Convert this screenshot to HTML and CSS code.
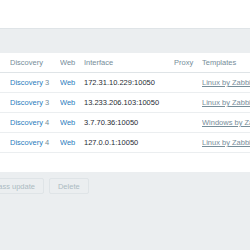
FILE: index.html
```html
<!DOCTYPE html>
<html lang="en">
<head>
  <meta charset="UTF-8">
  <meta name="viewport" content="width=device-width, initial-scale=1.0">
  <link rel="stylesheet" href="styles.css">
</head>
<body>
  <div class="top"></div>
  <div class="filter-bar"></div>

  <!-- hosts list -->
  <div class="list">
    <div class="row head">
      <div>Discovery</div>
      <div>Web</div>
      <div>Interface</div>
      <div>Proxy</div>
      <div>Templates</div>
    </div>
    <div class="row">
      <div><a class="link">Discovery</a> <span class="count">3</span></div>
      <div><a class="link">Web</a></div>
      <div>172.31.10.229:10050</div>
      <div></div>
      <div><a class="tpl">Linux by Zabbix agent</a></div>
    </div>
    <div class="row">
      <div><a class="link">Discovery</a> <span class="count">3</span></div>
      <div><a class="link">Web</a></div>
      <div>13.233.206.103:10050</div>
      <div></div>
      <div><a class="tpl">Linux by Zabbix agent</a></div>
    </div>
    <div class="row">
      <div><a class="link">Discovery</a> <span class="count">4</span></div>
      <div><a class="link">Web</a></div>
      <div>3.7.70.36:10050</div>
      <div></div>
      <div><a class="tpl">Windows by Zabbix agent</a></div>
    </div>
    <div class="row">
      <div><a class="link">Discovery</a> <span class="count">4</span></div>
      <div><a class="link">Web</a></div>
      <div>127.0.0.1:10050</div>
      <div></div>
      <div><a class="tpl">Linux by Zabbix server</a></div>
    </div>
    <div class="list-foot"></div>
  </div>

  <div class="actions">
    <button class="btn first" disabled>Mass update</button>
    <button class="btn" disabled>Delete</button>
  </div>
</body>
</html>
```

FILE: styles.css
```css
html, body {
  margin: 0;
  padding: 0;
  height: 100%;
}

body {
  background-color: #ebeef0;
  font-family: "Liberation Sans", Arial, sans-serif;
  font-size: 7.5px;
  color: #1f2c33;
  overflow: hidden;
}

.top {
  height: 28px;
  background-color: #fff;
  border-bottom: 1px solid #dfe4e7;
}

.filter-bar {
  height: 24px;
  background-color: #ebeef0;
}

.list {
  background-color: #fff;
}

.row {
  display: grid;
  grid-template-columns: 50px 24px 90px 28px 1fr;
  padding-left: 10px;
  height: 19px;
  align-items: center;
  border-bottom: 1px solid #ebeef0;
  white-space: nowrap;
  overflow: hidden;
}

.row > div {
  overflow: hidden;
}

.row.head {
  color: #768d99;
  border-bottom: 1px solid #dfe4e7;
}

.link {
  color: #2a7dbd;
}

.count {
  color: #768d99;
}

.tpl {
  color: #768d99;
  text-decoration: underline;
}

.list-foot {
  height: 19px;
}

.actions {
  display: flex;
  gap: 5px;
  padding-top: 6px;
}

.btn {
  font-family: inherit;
  font-size: 7.5px;
  height: 16px;
  padding: 0 8px;
  background-color: #ebeef0;
  border: 1px solid #dfe4e7;
  border-radius: 2px;
  color: #acbbc2;
}

.btn.first {
  margin-left: -17px;
}
```
